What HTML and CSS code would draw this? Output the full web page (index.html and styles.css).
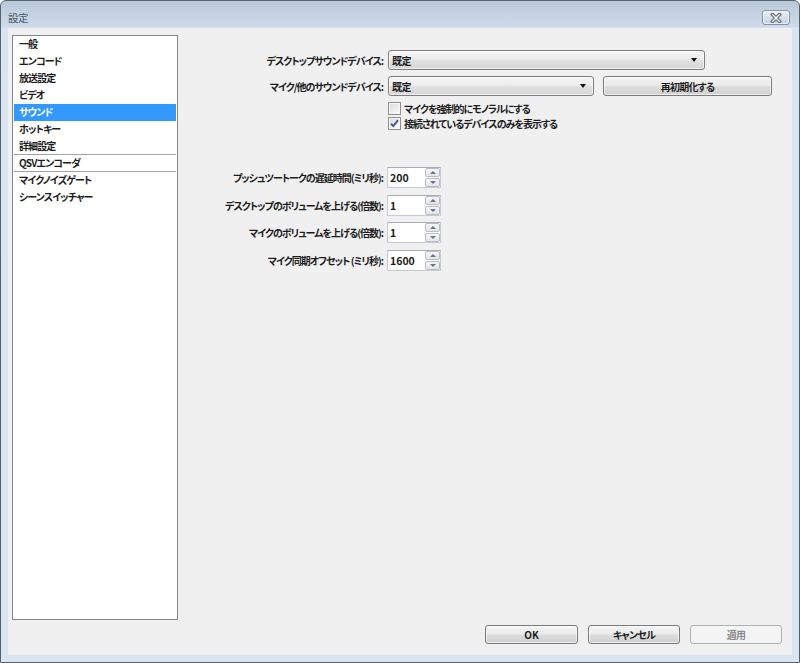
FILE: index.html
```html
<!DOCTYPE html>
<html lang="ja">
<head>
<meta charset="utf-8">
<title>設定</title>
<link rel="stylesheet" href="styles.css">
</head>
<body>
<div class="window">
  <div class="titlebar">
    <span class="title">設定</span>
    <button class="close" aria-label="閉じる">
      <svg width="12" height="10" viewBox="0 0 12 10">
        <path d="M2.5 1.5 L9.5 8.5 M9.5 1.5 L2.5 8.5" stroke="#56606b" stroke-width="3.4" stroke-linecap="square" fill="none"/>
        <path d="M2.5 1.5 L9.5 8.5 M9.5 1.5 L2.5 8.5" stroke="#ffffff" stroke-width="1.4" stroke-linecap="square" fill="none"/>
      </svg>
    </button>
  </div>
  <div class="client">
    <div class="main">
      <ul class="nav">
        <li>一般</li>
        <li>エンコード</li>
        <li>放送設定</li>
        <li>ビデオ</li>
        <li class="active">サウンド</li>
        <li>ホットキー</li>
        <li class="sep">詳細設定</li>
        <li class="sep">QSVエンコーダ</li>
        <li>マイクノイズゲート</li>
        <li>シーンスイッチャー</li>
      </ul>
      <div class="panel">
        <div class="devices">
          <span class="lbl">デスクトップサウンドデバイス:</span>
          <div class="combo combo-wide"><span>既定</span><i class="drop"></i></div>
          <span class="lbl r2">マイク/他のサウンドデバイス:</span>
          <div class="r2 mic-row">
            <div class="combo combo-mic"><span>既定</span><i class="drop"></i></div>
            <button class="btn btn-reinit">再初期化する</button>
          </div>
          <div class="check c1">
            <span class="cb"></span>
            <span>マイクを強制的にモノラルにする</span>
          </div>
          <div class="check c2">
            <span class="cb checked">
              <svg width="11" height="11" viewBox="0 0 11 11"><path d="M2 5.6 L4.3 8.2 L9 2.2" stroke="#3f5c93" stroke-width="1.9" fill="none" stroke-linejoin="round"/></svg>
            </span>
            <span>接続されているデバイスのみを表示する</span>
          </div>
        </div>
        <div class="spins">
          <span class="lbl">プッシュツートークの遅延時間(ミリ秒):</span>
          <div class="spin"><span class="val">200</span><span class="sbtns"><span class="sb"><i class="up"></i></span><span class="sb"><i class="dn"></i></span></span></div>
          <span class="lbl">デスクトップのボリュームを上げる(倍数):</span>
          <div class="spin"><span class="val">1</span><span class="sbtns"><span class="sb"><i class="up"></i></span><span class="sb"><i class="dn"></i></span></span></div>
          <span class="lbl">マイクのボリュームを上げる(倍数):</span>
          <div class="spin"><span class="val">1</span><span class="sbtns"><span class="sb"><i class="up"></i></span><span class="sb"><i class="dn"></i></span></span></div>
          <span class="lbl">マイク同期オフセット (ミリ秒):</span>
          <div class="spin"><span class="val">1600</span><span class="sbtns"><span class="sb"><i class="up"></i></span><span class="sb"><i class="dn"></i></span></span></div>
        </div>
      </div>
    </div>
    <div class="buttons">
      <button class="btn btn-ok">OK</button>
      <button class="btn btn-cancel">キャンセル</button>
      <button class="btn btn-apply" disabled>適用</button>
    </div>
  </div>
</div>
</body>
</html>
```
FILE: styles.css
```css
* { box-sizing: border-box; }
html, body { margin: 0; padding: 0; }
body {
  background: #ffffff;
  font-family: "Noto Sans CJK JP", "Noto Sans", sans-serif;
  font-feature-settings: "palt";
  color: #1c1c1c;
}
.window {
  width: 800px;
  height: 663px;
  border: 1px solid #57626e;
  border-radius: 6px 6px 0 0;
  display: flex;
  flex-direction: column;
  background: linear-gradient(to bottom, #bac9da 0, #cfdbe9 26px, #d9e4f1 27px, #dae5f2 100%);
  overflow: hidden;
}
.titlebar {
  height: 27px;
  flex: none;
  display: flex;
  justify-content: space-between;
  align-items: flex-start;
}
.title {
  margin: 10px 0 0 7px;
  font-size: 10.5px;
  line-height: 14px;
  color: #4a5766;
  letter-spacing: -0.5px;
}
.close {
  margin: 9px 9px 0 0;
  width: 28px;
  height: 15px;
  padding: 0;
  border: 1px solid #8593a3;
  border-radius: 3px;
  background: linear-gradient(to bottom, #e9eff6 0%, #d6e0eb 50%, #c9d5e2 100%);
  box-shadow: inset 0 0 0 1px rgba(255,255,255,0.5);
  display: flex;
  align-items: center;
  justify-content: center;
}
.client {
  flex: 1;
  margin: 0 7px 7px;
  background: #f0f0f0;
  display: flex;
  flex-direction: column;
  padding: 7px 10px 11px 4px;
  min-height: 0;
}
.main {
  flex: 1;
  display: flex;
  min-height: 0;
}
.nav {
  width: 166px;
  flex: none;
  margin: 0;
  padding: 0 1px;
  list-style: none;
  background: #ffffff;
  border: 1px solid #828790;
}
.nav li {
  height: 17px;
  line-height: 16px;
  padding-left: 5px;
  font-size: 10px;
  font-weight: 700;
  letter-spacing: -0.9px;
  color: #1c1c1c;
  white-space: nowrap;
}
.nav li.active {
  background: #3399ff;
  color: #ffffff;
}
.nav li.sep {
  border-bottom: 1px solid #a3a3a3;
}
.panel {
  flex: 1;
  padding-top: 15px;
}
.lbl {
  font-size: 10px;
  font-weight: 700;
  letter-spacing: -1px;
  text-align: right;
  white-space: nowrap;
  align-self: center;
}
.devices {
  display: grid;
  grid-template-columns: 205px auto;
  column-gap: 5px;
  justify-content: start;
}
.r2 { margin-top: 6px; }
.combo {
  height: 20px;
  border: 1px solid #7e7e7e;
  border-radius: 3px;
  background: linear-gradient(to bottom, #f5f5f5 0%, #ededed 45%, #e0e0e0 55%, #d6d6d6 100%);
  box-shadow: inset 0 0 0 1px rgba(255,255,255,0.6);
  display: flex;
  align-items: center;
  justify-content: space-between;
  padding: 0 7px 0 3px;
  font-size: 10px;
  font-weight: 700;
  letter-spacing: -0.5px;
}
.combo-wide { width: 317px; }
.combo-mic { width: 206px; }
.drop {
  width: 0;
  height: 0;
  border-left: 3.5px solid transparent;
  border-right: 3.5px solid transparent;
  border-top: 4px solid #111111;
}
.mic-row {
  display: flex;
  gap: 9px;
}
.btn {
  height: 20px;
  padding: 0;
  border: 1px solid #7a7a7a;
  border-radius: 3px;
  background: linear-gradient(to bottom, #f4f4f4 0%, #ebebeb 45%, #dddddd 55%, #d0d0d0 100%);
  box-shadow: inset 0 0 0 1px rgba(255,255,255,0.65);
  font-family: "Noto Sans CJK JP", "Noto Sans", sans-serif;
  font-feature-settings: "palt";
  font-size: 10px;
  font-weight: 700;
  color: #1c1c1c;
  letter-spacing: -0.8px;
}
.btn-reinit { width: 169px; }
.check {
  grid-column: 2;
  display: flex;
  align-items: center;
  gap: 3px;
  height: 13px;
  font-size: 10px;
  font-weight: 700;
  letter-spacing: -1px;
  white-space: nowrap;
}
.c1 { margin-top: 6px; }
.c2 { margin-top: 2px; }
.cb {
  width: 13px;
  height: 13px;
  flex: none;
  border: 1px solid #8e8f8f;
  background: linear-gradient(135deg, #d7d9dc 0%, #f2f2f2 70%, #fbfbfb 100%);
  box-shadow: inset 0 0 0 1px #f6f6f6;
  display: flex;
  align-items: center;
  justify-content: center;
}
.spins {
  margin-top: 37px;
  display: grid;
  grid-template-columns: 205px 54px;
  column-gap: 4px;
  row-gap: 6.6px;
  justify-content: start;
}
.spin {
  height: 21px;
  display: flex;
  align-items: stretch;
  background: #ffffff;
  border: 1px solid #c6cad1;
  border-top-color: #abadb3;
  padding: 0 0 0 2px;
}
.val {
  flex: 1;
  font-size: 10.5px;
  font-weight: 700;
  line-height: 19px;
}
.sbtns {
  width: 15px;
  flex: none;
  display: flex;
  flex-direction: column;
  gap: 1px;
}
.sb {
  flex: 1;
  border: 1px solid #b8bcc3;
  border-radius: 2px;
  background: linear-gradient(to bottom, #f6f6f6, #e5e5e5);
  display: flex;
  align-items: center;
  justify-content: center;
}
.up {
  width: 0; height: 0;
  border-left: 3px solid transparent;
  border-right: 3px solid transparent;
  border-bottom: 3px solid #5d75a3;
}
.dn {
  width: 0; height: 0;
  border-left: 3px solid transparent;
  border-right: 3px solid transparent;
  border-top: 3px solid #5d75a3;
}
.buttons {
  flex: none;
  margin-top: 5px;
  display: flex;
  justify-content: flex-end;
  gap: 10px;
}
.buttons .btn { height: 19px; width: 92px; }
.btn-ok { width: 93px !important; letter-spacing: 0; }
.btn-apply {
  border-color: #adb2b5;
  background: #f4f4f4;
  box-shadow: none;
  color: #8d8d8d;
}
```
